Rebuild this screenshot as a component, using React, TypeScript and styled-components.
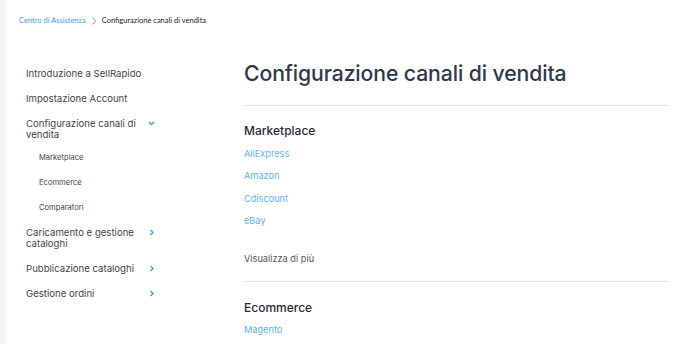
import React from 'react'
import styled, { createGlobalStyle } from 'styled-components'

const GlobalStyle = createGlobalStyle`
  html, body {
    margin: 0;
    padding: 0;
    background: #ffffff;
  }
  body {
    font-family: Inter, "Noto Sans", sans-serif;
    color: #333;
  }
`

const Page = styled.div`
  width: 675px;
  height: 344px;
  overflow: hidden;
  box-sizing: border-box;
  border-left: 6px solid #f4f6fa;
  display: flex;
  flex-direction: column;
`

const Breadcrumb = styled.nav`
  display: flex;
  align-items: center;
  gap: 5px;
  padding: 15px 0 0 13px;
  height: 12px;
  line-height: 12px;
  font-family: Lato, "Liberation Sans", sans-serif;
  font-size: 7.5px;
  color: #222;
`

const Crumb = styled.a`
  color: #3ba3e4;
  text-decoration: none;
`

const Body = styled.div`
  display: grid;
  grid-template-columns: 238px 425px;
  flex: 1;
`

const Sidebar = styled.ul`
  list-style: none;
  margin: 0;
  padding: 33.5px 0 0 20px;
`

const NavItem = styled.li`
  display: flex;
  align-items: flex-start;
  padding: 7px 0;
`

const NavLabel = styled.span`
  width: 117px;
  font-size: 9.6px;
  line-height: 11px;
  color: #444;
`

const Chevron = styled.svg`
  margin-left: 4px;
  flex: none;
`

const SubList = styled.ul`
  list-style: none;
  margin: -2px 0 0 0;
  padding: 0 0 0 13px;
`

const SubItem = styled.li`
  height: 25px;
  line-height: 25px;
  font-size: 7.6px;
  color: #444;
`

const Main = styled.main`
  padding-top: 32px;
`

const Title = styled.h1`
  margin: 0;
  font-size: 21.2px;
  line-height: 28px;
  font-weight: 500;
  color: #2d394b;
  letter-spacing: -0.1px;
`

const Divider = styled.hr<{ $before: number; $after: number }>`
  border: none;
  border-top: 1px solid #e3e2ec;
  margin: ${p => p.$before}px 0 ${p => p.$after}px 0;
`

const SectionTitle = styled.h2`
  margin: 0 0 3.5px 0;
  font-size: 12px;
  line-height: 16px;
  font-weight: 500;
  color: #262b35;
`

const LinkList = styled.ul`
  list-style: none;
  margin: 0;
  padding: 0;
`

const Link = styled.li`
  height: 22.5px;
  line-height: 22.5px;
  font-size: 9.2px;
  color: #5eb2ec;
`

const More = styled.div`
  margin-top: 19px;
  line-height: 14px;
  font-size: 9.2px;
  color: #555;
`

const DownIcon = () => (
  <Chevron width="9" height="11" viewBox="0 0 9 11">
    <polyline points="2,4 4.5,6.5 7,4" fill="none" stroke="#3aa3e6" strokeWidth="1.4" />
  </Chevron>
)

const RightIcon = () => (
  <Chevron width="9" height="11" viewBox="0 0 9 11">
    <polyline points="3.5,3 6,5.5 3.5,8" fill="none" stroke="#3aa3e6" strokeWidth="1.4" />
  </Chevron>
)

const nav = [
  { label: 'Introduzione a SellRapido' },
  { label: 'Impostazione Account' },
  { label: 'Configurazione canali di vendita', icon: 'down', children: ['Marketplace', 'Ecommerce', 'Comparatori'] },
  { label: 'Caricamento e gestione cataloghi', icon: 'right' },
  { label: 'Pubblicazione cataloghi', icon: 'right' },
  { label: 'Gestione ordini', icon: 'right' },
]

export default function App() {
  return (
    <>
      <GlobalStyle />
      <Page>
        <Breadcrumb>
          <Crumb>Centro di Assistenza</Crumb>
          <svg width="6" height="10" viewBox="0 0 6 10">
            <polyline points="1.5,1.5 4.5,5 1.5,8.5" fill="none" stroke="#999" strokeWidth="1" />
          </svg>
          <span>Configurazione canali di vendita</span>
        </Breadcrumb>
        <Body>
          <Sidebar>
            {nav.map(item => (
              <React.Fragment key={item.label}>
                <NavItem>
                  <NavLabel>{item.label}</NavLabel>
                  {item.icon === 'down' && <DownIcon />}
                  {item.icon === 'right' && <RightIcon />}
                </NavItem>
                {item.children && (
                  <SubList>
                    {item.children.map(c => <SubItem key={c}>{c}</SubItem>)}
                  </SubList>
                )}
              </React.Fragment>
            ))}
          </Sidebar>
          <Main>
            <Title>Configurazione canali di vendita</Title>
            <Divider $before={18} $after={17} />
            <SectionTitle>Marketplace</SectionTitle>
            <LinkList>
              {['AliExpress', 'Amazon', 'Cdiscount', 'eBay'].map(l => <Link key={l}>{l}</Link>)}
            </LinkList>
            <More>Visualizza di più</More>
            <Divider $before={15} $after={18} />
            <SectionTitle>Ecommerce</SectionTitle>
            <LinkList>
              <Link>Magento</Link>
            </LinkList>
          </Main>
        </Body>
      </Page>
    </>
  )
}
